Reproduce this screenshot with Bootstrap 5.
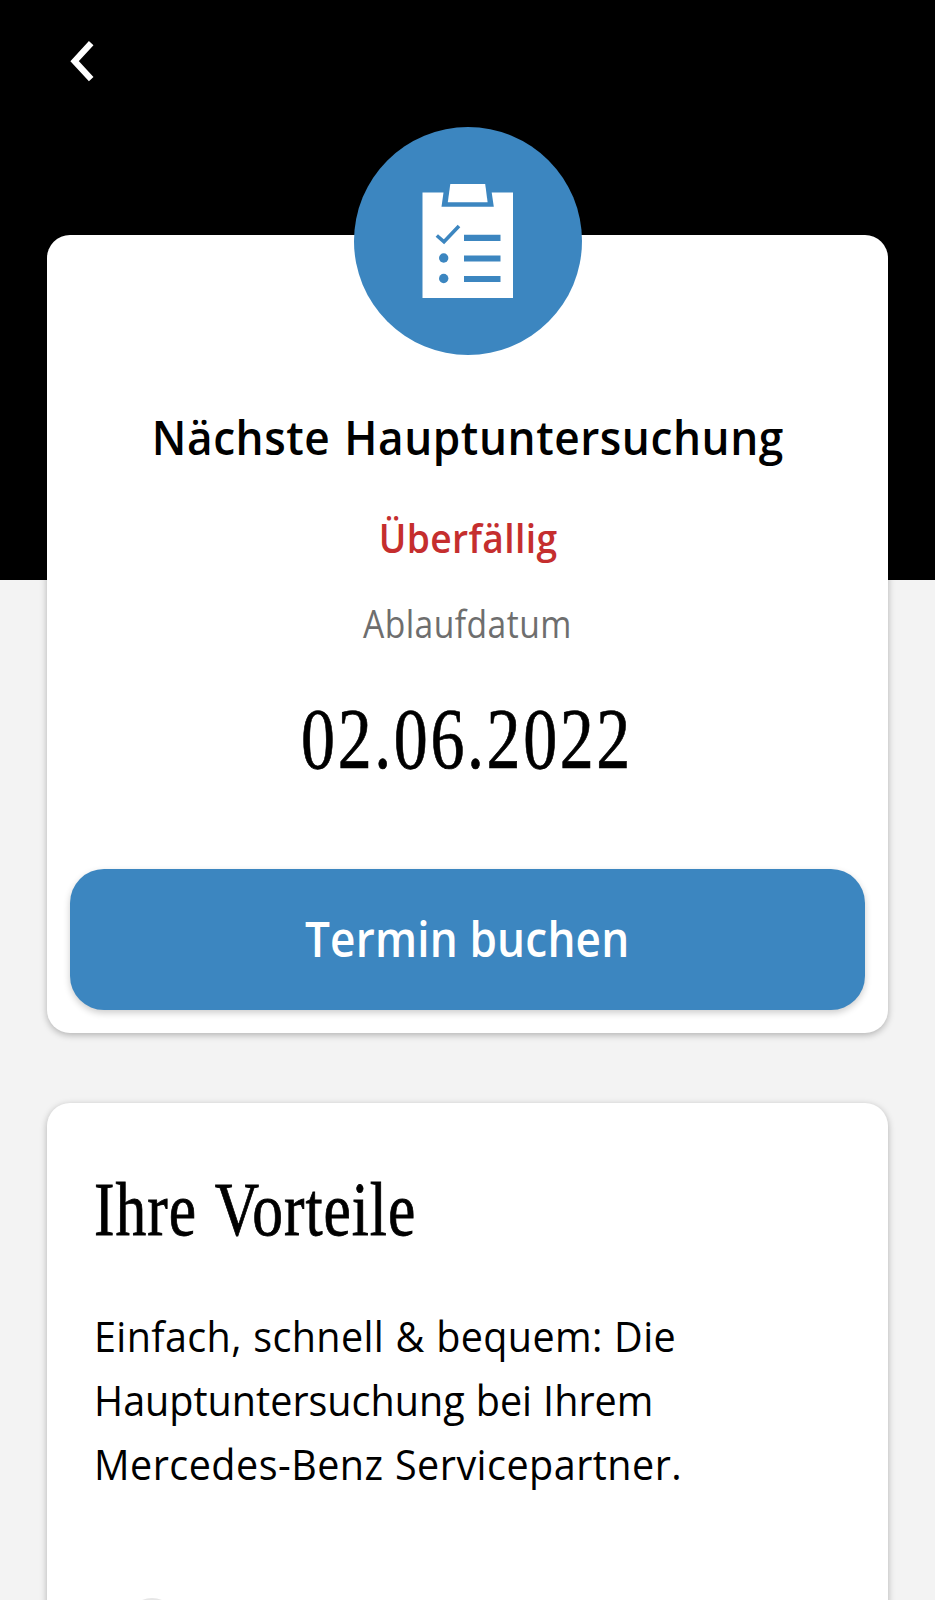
<!DOCTYPE html>
<html lang="de">
<head>
<meta charset="utf-8">
<meta name="viewport" content="width=device-width, initial-scale=1">
<title>Nächste Hauptuntersuchung</title>
<link rel="stylesheet" href="https://cdn.jsdelivr.net/npm/bootstrap@5.3.0/dist/css/bootstrap.min.css">
<style>
  body { background: #f3f3f3; font-family: "Open Sans", sans-serif; color: #000; }
  .screen { height: 1600px; padding: 0 47px; background: linear-gradient(#000 580px, #f3f3f3 580px); }
  .topbar { height: 235px; padding: 41px 0 0 23px; }
  .tile { --bs-card-border-width: 0; --bs-card-border-radius: 23px; box-shadow: 0 2px 7px rgba(0,0,0,.28); color: #000; }
  .tile-main { height: 798px; padding: 172px 23px 23px; }
  .tile-info { height: 520px; margin-top: 70px; padding: 61px 47px 0; }
  .emblem { top: -108px; left: 50%; width: 228px; height: 228px; margin-left: -114px; background: #3c86c0; }
  .fit { display: inline-block; white-space: nowrap; transform-origin: center; }
  .title { font-size: 47.5px; line-height: 60px; font-weight: 600; }
  .title .fit { transform: scaleX(.93); letter-spacing: .6px; word-spacing: 2px; margin: 0 -20px; }
  .status { font-size: 40px; line-height: 50px; font-weight: 600; color: #c52e2e; margin-top: 46px; }
  .status .fit { transform: scaleX(.93); letter-spacing: .4px; margin-right: -1px; }
  .caption-text { font-size: 37.8px; line-height: 50px; color: #6e6e6e; margin-top: 36px; }
  .caption-text .fit { transform: scaleX(.89); letter-spacing: .5px; }
  .date { font: 86px/100px "Liberation Serif", serif; -webkit-text-stroke: .7px #000; margin-top: 40px; }
  .date .fit { transform: scaleX(.79); letter-spacing: 3.3px; margin-right: 1px; }
  .btn-book { --bs-btn-bg: #3c86c0; --bs-btn-color: #fff; --bs-btn-hover-bg: #3579af; --bs-btn-hover-color: #fff;
    --bs-btn-border-width: 0; --bs-btn-border-radius: 34px; --bs-btn-font-size: 49px; --bs-btn-font-weight: 600;
    height: 141px; padding: 0 0 4px; line-height: 60px; box-shadow: 0 3px 7px rgba(0,0,0,.2); }
  .btn-book .fit { transform: scaleX(.9); letter-spacing: .2px; }
  .heading { font: 76px/90px "Liberation Serif", serif; -webkit-text-stroke: .8px #000; }
  .heading .fit { transform: scaleX(.81); transform-origin: left; letter-spacing: 1.2px; word-spacing: 3px; }
  .copy { font-size: 42.5px; line-height: 64.3px; margin-top: 49.5px; }
  .copy .fit { display: block; transform: scaleX(.93); transform-origin: left; letter-spacing: .4px; word-spacing: .8px; }
  .copy .fit:nth-child(2) { letter-spacing: 0; }
  .copy .fit:nth-child(3) { letter-spacing: .5px; }
  .bullet { width: 52px; height: 52px; margin: 102px 0 0 32px; background: #e6e6e6; }
</style>
</head>
<body>
<main class="screen overflow-hidden">
  <header class="topbar">
    <a href="#" aria-label="Zurück" class="d-inline-block lh-1">
      <svg class="d-block" width="26" height="42" viewBox="0 0 26 42" fill="none" stroke="#fff" stroke-width="6.2"><path d="M21.2 2.2 4.6 20.2 21.2 38.2"/></svg>
    </a>
  </header>

  <section class="card tile tile-main text-center">
    <div class="emblem rounded-circle position-absolute d-flex align-items-center justify-content-center">
      <svg width="228" height="228" viewBox="0 0 228 228">
        <path fill="#fff" d="M68.5 65.5H89.5L87.5 79.7H139.8L137.7 65.5H159V171H68.5z"/>
        <path fill="#fff" d="M96.3 57H131.2L133.6 75.2H93.8z"/>
        <g fill="none" stroke="#3c86c0" stroke-width="6.2">
          <path d="M110 110.8H146.5M110 131.5H146.5M110 152H146.5"/>
          <path stroke-width="3.6" d="M82.8 108.5 90 114.8 105 99"/>
        </g>
        <circle cx="89.7" cy="131" r="4.7" fill="#3c86c0"/>
        <circle cx="89.7" cy="151.5" r="4.7" fill="#3c86c0"/>
      </svg>
    </div>
    <h1 class="title mb-0"><span class="fit">Nächste Hauptuntersuchung</span></h1>
    <div class="status"><span class="fit">Überfällig</span></div>
    <div class="caption-text"><span class="fit">Ablaufdatum</span></div>
    <div class="date"><span class="fit">02.06.2022</span></div>
    <button type="button" class="btn btn-book w-100 mt-auto"><span class="fit">Termin buchen</span></button>
  </section>

  <section class="card tile tile-info">
    <h2 class="heading mb-0"><span class="fit">Ihre Vorteile</span></h2>
    <p class="copy mb-0">
      <span class="fit">Einfach, schnell &amp; bequem: Die</span>
      <span class="fit">Hauptuntersuchung bei Ihrem</span>
      <span class="fit">Mercedes-Benz Servicepartner.</span>
    </p>
    <div class="bullet rounded-circle flex-shrink-0"></div>
  </section>
</main>
<script src="https://cdn.jsdelivr.net/npm/bootstrap@5.3.0/dist/js/bootstrap.bundle.min.js"></script>
</body>
</html>
